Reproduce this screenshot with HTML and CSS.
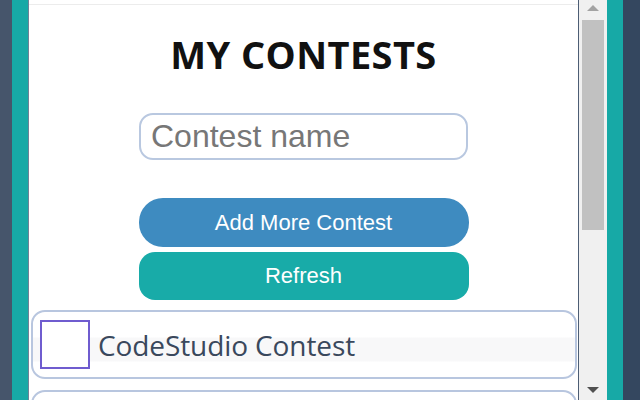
FILE: index.html
```html
<!DOCTYPE html>
<html>
<head>
<meta charset="utf-8">
<link rel="stylesheet" href="styles.css">
</head>
<body>
<div class="frame">
  <div class="edge-dark-left"></div>
  <div class="edge-teal"></div>
  <div class="panel">
    <div class="content">
      <div class="topline"></div>
      <h1 class="title">MY CONTESTS</h1>
      <input class="name-input" type="text" placeholder="Contest name">
      <button class="btn btn-add">Add More Contest</button>
      <button class="btn btn-refresh">Refresh</button>
      <div class="card">
        <div class="check"></div>
        <span class="card-name">CodeStudio Contest</span>
      </div>
      <div class="card card-next"></div>
    </div>
    <div class="scrollbar">
      <div class="arrow arrow-up"></div>
      <div class="thumb"></div>
      <div class="track-fill"></div>
      <div class="arrow arrow-down"></div>
    </div>
  </div>
  <div class="edge-teal edge-teal-right"></div>
  <div class="edge-dark-right"></div>
</div>
</body>
</html>
```

FILE: styles.css
```css
* { box-sizing: border-box; }
html, body {
  margin: 0;
  padding: 0;
  width: 640px;
  height: 400px;
  overflow: hidden;
  background: #44546a;
}
.frame {
  display: flex;
  width: 640px;
  height: 400px;
}
.edge-dark-left {
  width: 12px;
  background: #46556b;
}
.edge-teal {
  background: #17a9a6;
  border-right: 1px solid #6f8297;
  width: 17px;
}
.edge-teal-right {
  border-right: none;
  width: 16px;
}
.edge-dark-right {
  width: 17px;
  background: #34475f;
}
.panel {
  flex: 1;
  display: flex;
  background: #ffffff;
  height: 400px;
}
.content {
  flex: 1;
  display: flex;
  flex-direction: column;
  align-items: center;
  padding-top: 4px;
  border-right: 1px solid #4c5d74;
  overflow: hidden;
}
.content > * {
  flex-shrink: 0;
}
.topline {
  align-self: stretch;
  height: 1px;
  background: #ececec;
}
.title {
  margin: 26px 0 0 0;
  font-family: "Open Sans", "Noto Sans", sans-serif;
  font-weight: 700;
  font-size: 38px;
  line-height: 46px;
  color: #111111;
  letter-spacing: 0.4px;
}
.name-input {
  margin-top: 36px;
  width: 329px;
  height: 47px;
  border: 2px solid #b9c8e0;
  border-radius: 14px;
  padding: 0 10px;
  font-family: "Liberation Sans", Arial, sans-serif;
  font-size: 32px;
  color: #333;
  outline: none;
  background: #fff;
}
.name-input::placeholder {
  color: #777777;
}
.btn {
  width: 330px;
  border: none;
  color: #ffffff;
  font-family: "Liberation Sans", Arial, sans-serif;
  font-size: 22px;
  padding: 0;
}
.btn-add {
  margin-top: 38px;
  height: 49px;
  border-radius: 24px;
  background: #3e8bc0;
}
.btn-refresh {
  margin-top: 5px;
  height: 48px;
  border-radius: 16px;
  background: #18aba8;
}
.card {
  margin-top: 10px;
  align-self: stretch;
  margin-left: 2px;
  margin-right: 1px;
  height: 69px;
  border: 2px solid #b8c6df;
  border-radius: 14px;
  display: flex;
  align-items: center;
  padding-left: 7px;
  background: linear-gradient(#ffffff 0, #ffffff 25px, #f8f8f9 26px, #f8f8f9 49px, #ffffff 50px);
}
.check {
  width: 50px;
  height: 49px;
  border: 2px solid #6f5ccf;
  background: #fff;
  flex-shrink: 0;
}
.card-name {
  margin-left: 8px;
  font-family: "Open Sans", "Noto Sans", sans-serif;
  font-size: 28px;
  color: #3a485c;
  letter-spacing: -0.1px;
}
.card-next {
  margin-top: 11px;
  background: #fff;
}
.scrollbar {
  width: 28px;
  background: #f0f0f0;
  display: flex;
  flex-direction: column;
  align-items: center;
}
.arrow {
  width: 0;
  height: 0;
  border-left: 6px solid transparent;
  border-right: 6px solid transparent;
}
.arrow-up {
  margin-top: 5px;
  border-bottom: 6px solid #a3a3a3;
}
.thumb {
  margin-top: 9px;
  width: 22px;
  height: 210px;
  background: #c1c1c1;
}
.track-fill {
  flex: 1;
}
.arrow-down {
  margin-bottom: 7px;
  border-top: 6px solid #505050;
}
```
